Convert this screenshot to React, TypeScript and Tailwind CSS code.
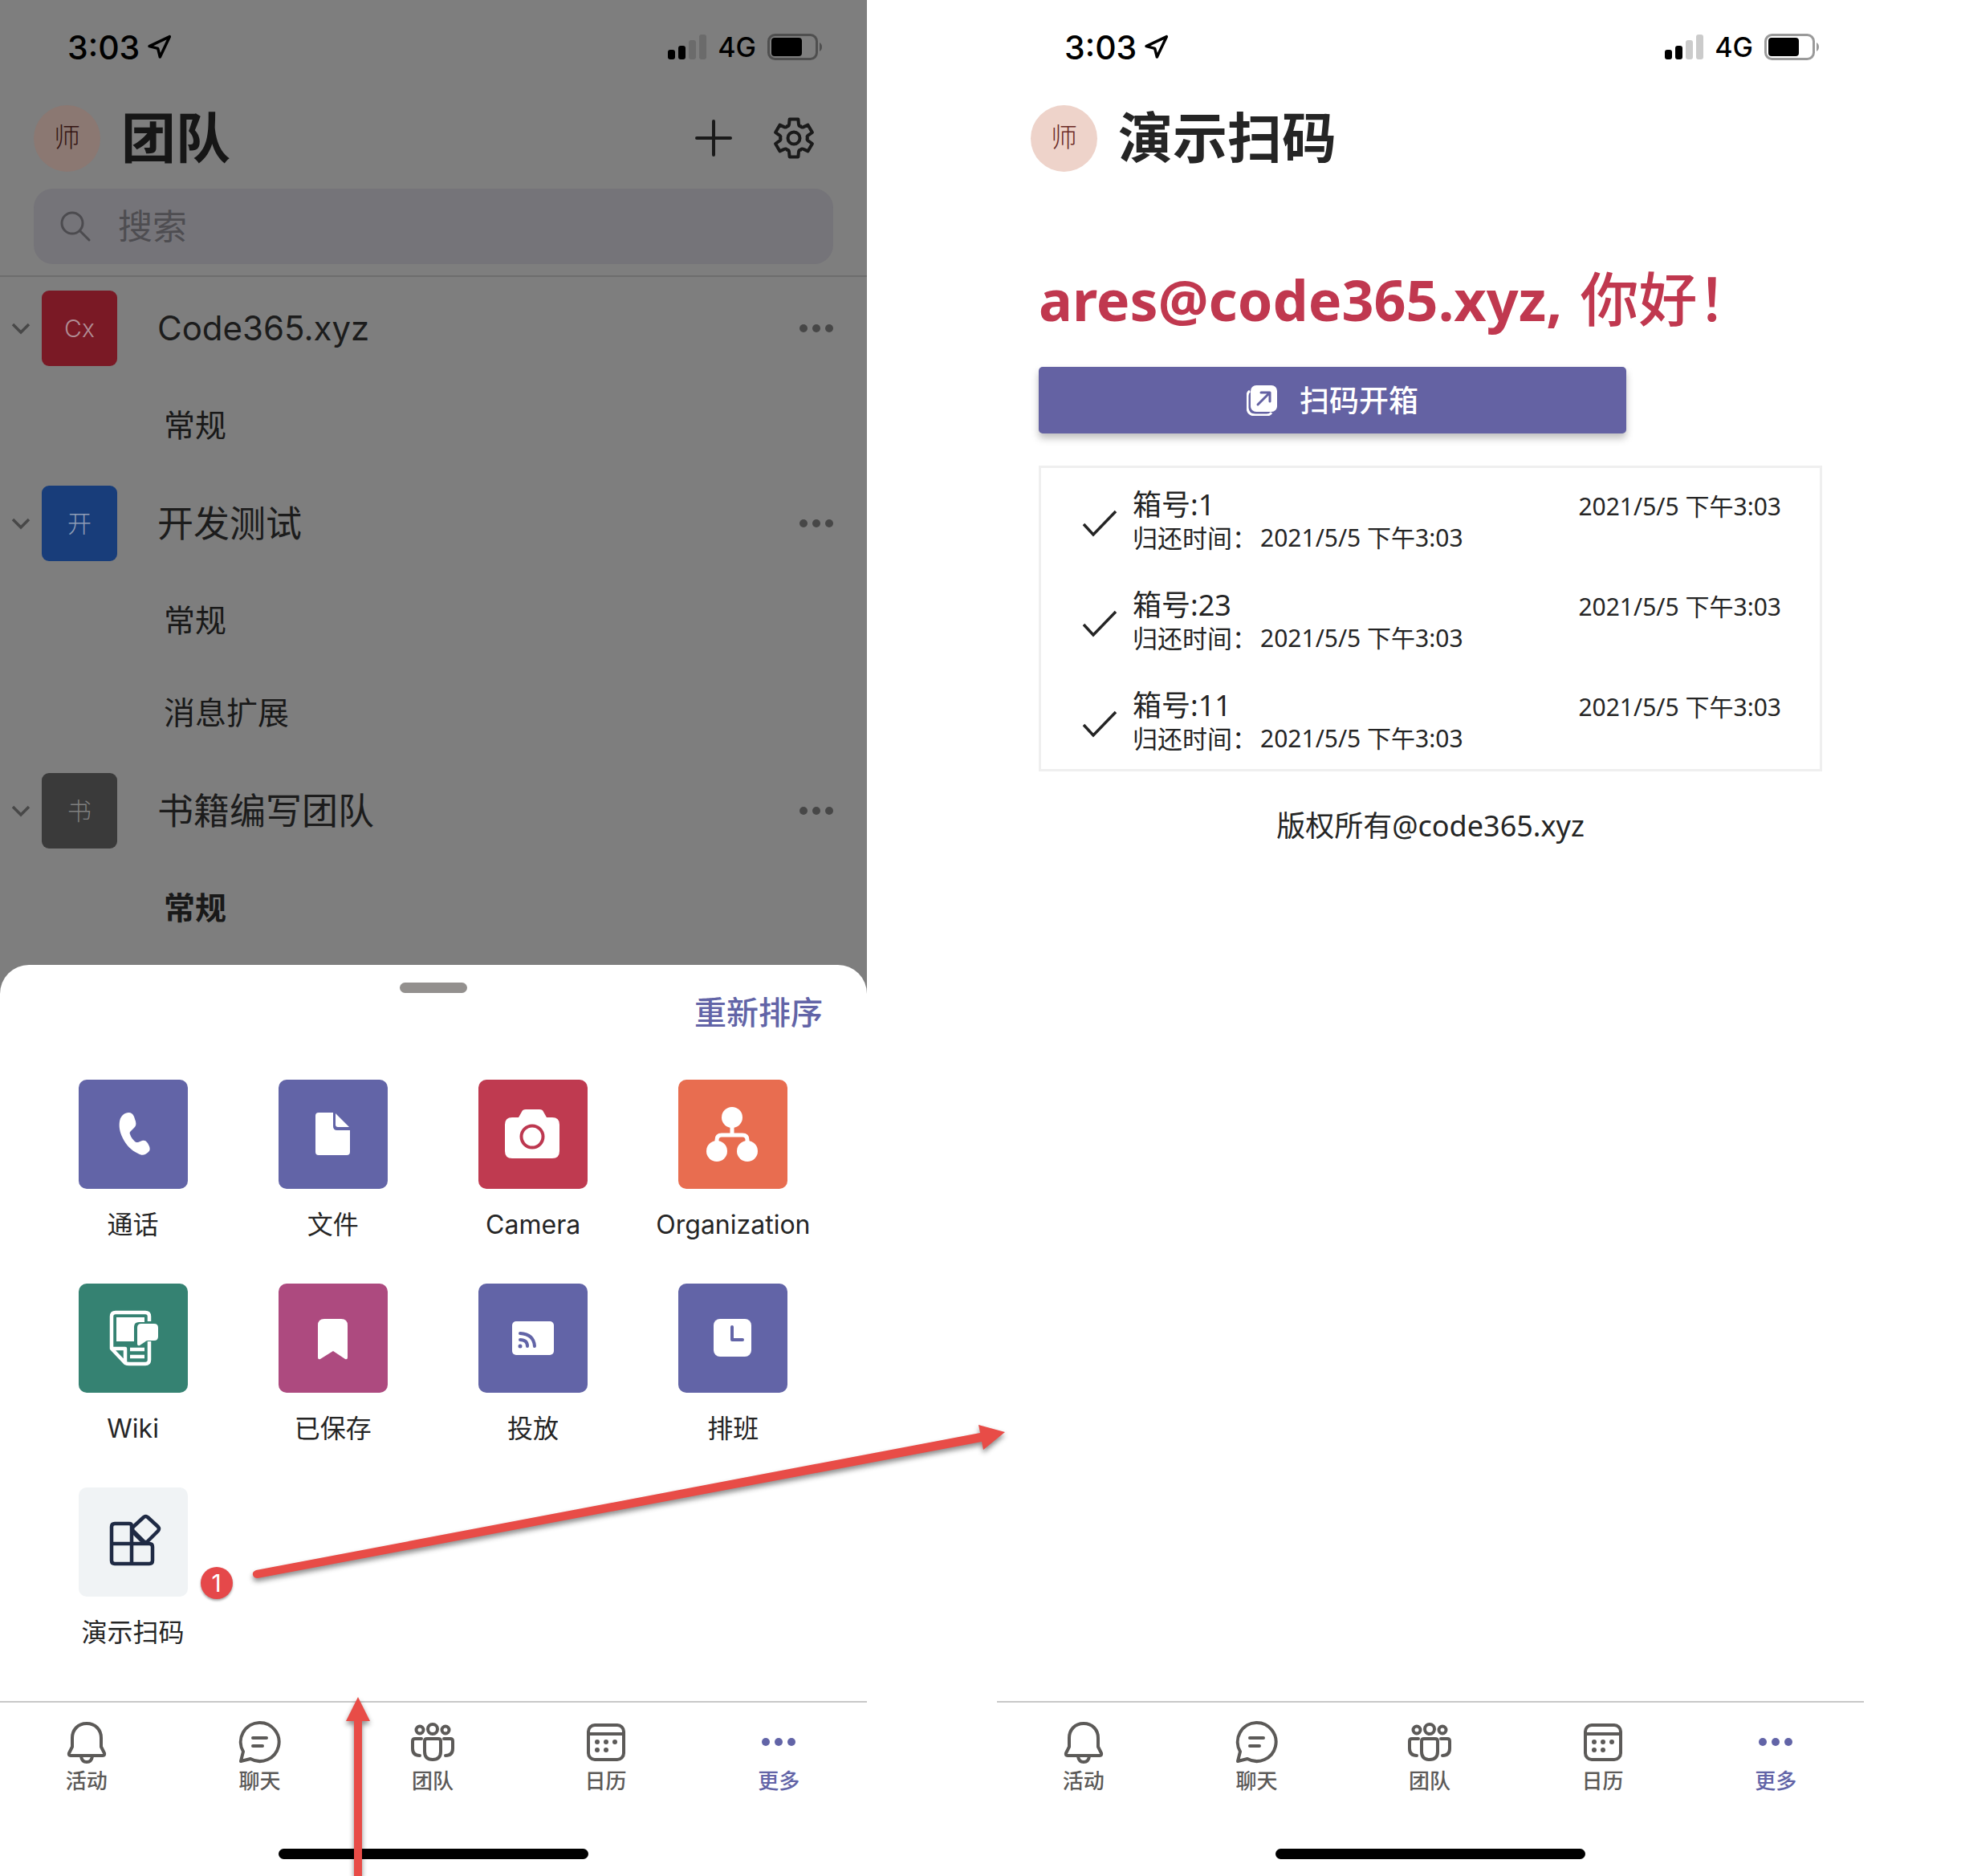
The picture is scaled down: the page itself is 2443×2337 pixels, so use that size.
import type { ReactNode } from "react";
import { Navigation } from "lucide-react";

const UI_FONT = "font-['Inter','Noto_Sans_CJK_SC',sans-serif]";
const WEB_FONT = "font-['Noto_Sans','Noto_Sans_CJK_SC',sans-serif]";

function StatusBar({ dim = false }: { dim?: boolean }) {
  return (
    <div className="flex h-[118px] items-center justify-between pr-[54px] pl-[84px] text-black">
      <div className="flex items-center gap-2">
        <span className="text-[41px] leading-none font-medium">3:03</span>
        <Navigation className="size-[32px]" strokeWidth={2.6} />
      </div>
      <div className="flex items-center gap-[14px]">
        <svg width="48" height="32" viewBox="0 0 48 32" aria-label="信号">
          <rect x="0" y="19" width="9" height="12" rx="3" />
          <rect x="13" y="14" width="9" height="17" rx="3" />
          <rect x="26" y="7" width="9" height="24" rx="3" fill={dim ? "#6b6b6b" : "#cbcbcb"} />
          <rect x="39" y="0" width="9" height="31" rx="3" fill={dim ? "#6b6b6b" : "#cbcbcb"} />
        </svg>
        <span className="text-[34px] leading-none font-medium">4G</span>
        <svg width="70" height="34" viewBox="0 0 70 34" aria-label="电池">
          <rect x="1.5" y="1.5" width="60" height="30" rx="8" fill="none" stroke={dim ? "#4f4f4f" : "#9a9a9a"} strokeWidth="3" />
          <rect x="5" y="5" width="38" height="23" rx="4" />
          <path d="M65 11c4 2 4 9 0 11z" fill={dim ? "#4f4f4f" : "#9a9a9a"} />
        </svg>
      </div>
    </div>
  );
}

const polar = (deg: number, r: number) => {
  const a = (deg * Math.PI) / 180;
  return `${(26 + r * Math.sin(a)).toFixed(2)} ${(26 - r * Math.cos(a)).toFixed(2)}`;
};
const gearPath =
  [0, 60, 120, 180, 240, 300]
    .map(
      (d) =>
        `${d === 0 ? "M" : "L"}${polar(d - 13, 24)}L${polar(d + 13, 24)}L${polar(d + 18, 19)}Q${polar(d + 23, 15.5)} ${polar(d + 30, 17)}Q${polar(d + 37, 15.5)} ${polar(d + 42, 19)}`,
    )
    .join("") + "Z";

function PageHeader({ title, dim = false, children }: { title: string; dim?: boolean; children?: ReactNode }) {
  return (
    <header className="flex h-[108px] items-center pr-[65px] pl-[42px]">
      <span
        className={`flex size-[83px] items-center justify-center rounded-full text-[33px] font-light ${
          dim ? "bg-[#8b7872] text-[#341412]" : "bg-[#eed3ca] text-[#6b2a26]"
        }`}
      >
        师
      </span>
      <h1 className={`ml-[26px] text-[68px] leading-none font-bold ${dim ? "text-[#161616]" : "text-[#252525]"}`}>{title}</h1>
      <div className="ml-auto flex items-center gap-[50px]">{children}</div>
    </header>
  );
}

function Dots({ className }: { className: string }) {
  return (
    <svg width="44" height="12" viewBox="0 0 44 12" className={className}>
      <circle cx="6" cy="6" r="5" />
      <circle cx="22" cy="6" r="5" />
      <circle cx="38" cy="6" r="5" />
    </svg>
  );
}

type Team = { name: string; mark: string; tile: string; size: string; channels: { name: string; unread?: boolean }[] };

const teams: Team[] = [
  { name: "Code365.xyz", mark: "Cx", size: "text-[42px]", tile: "bg-[#7a1925] text-[#b08c94]", channels: [{ name: "常规" }] },
  {
    name: "开发测试",
    mark: "开",
    size: "text-[45px]",
    tile: "bg-[#183d7a] text-[#8f9db6]",
    channels: [{ name: "常规" }, { name: "消息扩展" }],
  },
  { name: "书籍编写团队", mark: "书", size: "text-[45px]", tile: "bg-[#3a3a3a] text-[#808080]", channels: [{ name: "常规", unread: true }] },
];

function TeamGroup({ team }: { team: Team }) {
  return (
    <li>
      <div className="flex h-[128px] items-center pr-[41px] pl-[14px]">
        <button type="button" aria-label={`折叠 ${team.name}`} className="flex w-[38px]">
          <svg width="24" height="16" viewBox="0 0 24 16" fill="none" stroke="#484848" strokeWidth="3.5">
            <path d="M2 3l10 10L22 3" />
          </svg>
        </button>
        <span className={`flex size-[94px] items-center justify-center rounded-[9px] text-[30px] font-light ${team.tile}`}>{team.mark}</span>
        <span className={`ml-[50px] leading-none text-[#1c1c1c] ${team.size}`}>{team.name}</span>
        <button type="button" aria-label="更多选项" className="ml-auto">
          <Dots className="fill-[#474747]" />
        </button>
      </div>
      <ul>
        {team.channels.map((c) => (
          <li key={c.name} className="flex h-[115px] items-center pb-[3px] pl-[204px]">
            <a href="#" className={`text-[39px] leading-none text-[#191919] ${c.unread ? "font-bold" : ""}`}>
              {c.name}
            </a>
          </li>
        ))}
      </ul>
    </li>
  );
}

const tileIcons: Record<string, ReactNode> = {
  call: (
    <path
      fill="#fff"
      d="M58 42c5-2 9-1 11 4l2 6c1 4 0 6-2 8l-4 4c-1 1-2 2-1 4 1 4 4 7 6 9 1 1 2 1 4 1l5-2c3-1 5 0 7 3l2 4c1 3 1 5-1 7-4 4-8 5-13 2-9-4-15-11-19-19-4-8-5-15-4-21 1-5 3-8 7-10z"
    />
  ),
  file: (
    <g fill="#fff">
      <path d="M50 41h18v17q0 5 5 5h16v27q0 4-4 4H50q-4 0-4-4V45q0-4 4-4z" />
      <path d="M71 42l17 17H74q-3 0-3-3z" />
    </g>
  ),
  camera: (
    <>
      <path fill="#fff" d="M42 47h8l4-7q1-3 5-3h17q4 0 5 3l4 7h7q9 0 9 9v33q0 9-9 9H42q-9 0-9-9V56q0-9 9-9z" />
      <circle cx="67" cy="71" r="13.500" fill="none" stroke="#bd3850" strokeWidth="4" />
    </>
  ),
  org: (
    <>
      <g fill="#fff">
        <circle cx="67" cy="47" r="13" />
        <circle cx="48" cy="89" r="13" />
        <circle cx="86" cy="89" r="13" />
      </g>
      <path d="M67 55v14M48 84v-9q0-6 6-6h26q6 0 6 6v9" fill="none" stroke="#fff" strokeWidth="5" />
    </>
  ),
  wiki: (
    <>
      <path d="M88 47v-6q0-5-5-5H46q-5 0-5 5v40l17 18q2 1 5 1h20q5 0 5-5V72M41 81h17v19" fill="none" stroke="#fff" strokeWidth="4.500" strokeLinejoin="round" />
      <path d="M47 42h35v6H75q-6 0-6 6v18H47z" fill="#fff" />
      <path d="M78 50h16q5 0 5 5v11q0 5-5 5h-8q-2 0-4 2l-6 4q-3 1-3-2V55q0-5 5-5z" fill="#fff" />
      <path d="M64 82h18M64 91h18" stroke="#fff" strokeWidth="4.500" />
    </>
  ),
  saved: <path fill="#fff" d="M57 44h21q8 0 8 8v40q0 3-3 2L68 84l-16 10q-3 1-3-2V52q0-8 8-8z" />,
  cast: (
    <>
      <rect x="42" y="47" width="52" height="42" rx="5" fill="#fff" />
      <g fill="none" stroke="#6264a7" strokeWidth="4" strokeLinecap="round">
        <path d="M52 70q9 0 9 8M52 62q17 1 18 16" />
      </g>
      <circle cx="52" cy="78" r="2.500" fill="#6264a7" />
    </>
  ),
  shifts: (
    <>
      <rect x="44" y="44" width="47" height="47" rx="8" fill="#fff" />
      <path d="M67 54v16h13" fill="none" stroke="#6264a7" strokeWidth="4" strokeLinecap="round" strokeLinejoin="round" />
    </>
  ),
  demo: (
    <g fill="none" stroke="#1f2a44" strokeWidth="4.500" strokeLinejoin="round">
      <path d="M66 70V48q0-3-3-3H45q-4 0-4 4v42q0 4 4 4h43q4 0 4-4V74q0-4-4-4H41M66 70v25" />
      <path d="M81 37q2-2 5 0l13 12q2 2 0 5L86 67q-3 2-5 0L68 54q-2-3 0-5zM67 55l14 14" />
    </g>
  ),
};

const apps = [
  { id: "call", name: "通话", bg: "bg-[#6264a7]" },
  { id: "file", name: "文件", bg: "bg-[#6264a7]" },
  { id: "camera", name: "Camera", bg: "bg-[#bf3a50]" },
  { id: "org", name: "Organization", bg: "bg-[#e86d50]" },
  { id: "wiki", name: "Wiki", bg: "bg-[#358272]" },
  { id: "saved", name: "已保存", bg: "bg-[#ad4a7f]" },
  { id: "cast", name: "投放", bg: "bg-[#6264a7]" },
  { id: "shifts", name: "排班", bg: "bg-[#6264a7]" },
  { id: "demo", name: "演示扫码", bg: "bg-[#f0f3f5]" },
];

const tabs = [
  {
    name: "活动",
    icon: (
      <>
        <path d="M28 5c-11 0-18 8-18 18v11L6 42q-1 3 2 3h40q3 0 2-3l-4-8V23C46 13 39 5 28 5z" />
        <path d="M21 46q1 7 7 7t7-7" />
      </>
    ),
  },
  {
    name: "聊天",
    icon: (
      <>
        <path d="M28 4a24 24 0 1 1-11 45L5 52l3-12A24 24 0 0 1 28 4z" />
        <path d="M20 23h17M20 33h12" />
      </>
    ),
  },
  {
    name: "团队",
    icon: (
      <>
        <circle cx="28" cy="12" r="6" />
        <circle cx="12" cy="13" r="4.500" />
        <circle cx="44" cy="13" r="4.500" />
        <path d="M21 24h14q3 0 3 3v13q0 10-10 10T18 40V27q0-3 3-3z" />
        <path d="M14 24H6q-3 0-3 3v9q0 9 9 9M42 24h8q3 0 3 3v9q0 9-9 9" />
      </>
    ),
  },
  {
    name: "日历",
    icon: (
      <>
        <rect x="6" y="7" width="44" height="43" rx="8" />
        <path d="M6 18h44" />
        <g fill="#5c5a58" stroke="none">
          <circle cx="17" cy="28" r="3" />
          <circle cx="28" cy="28" r="3" />
          <circle cx="39" cy="28" r="3" />
          <circle cx="17" cy="38" r="3" />
          <circle cx="28" cy="38" r="3" />
        </g>
      </>
    ),
  },
];

function TabBar() {
  return (
    <nav className="mt-auto border-t-2 border-[#c8c8c8] bg-white pt-[21px] pb-[21px]">
      <div className="grid grid-cols-5 pr-[2px] text-[26px] leading-[34px] font-medium">
        {tabs.map((t) => (
          <a key={t.name} href="#" className="flex flex-col items-center gap-1 text-[#5c5a58]">
            <svg width="56" height="56" viewBox="0 0 56 56" fill="none" stroke="currentColor" strokeWidth="4" strokeLinecap="round" strokeLinejoin="round">
              {t.icon}
            </svg>
            {t.name}
          </a>
        ))}
        <a href="#" aria-current="page" className="flex flex-col items-center gap-1 text-[#6264a7]">
          <span className="flex h-[56px] items-center">
            <Dots className="fill-current" />
          </span>
          更多
        </a>
      </div>
      <div className="mx-auto mt-[67px] h-[13px] w-[386px] rounded-full bg-black" />
    </nav>
  );
}

function TeamsScreen() {
  return (
    <section className={`flex min-w-0 flex-1 flex-col bg-[#7e7e7e] ${UI_FONT}`}>
      <StatusBar dim />
      <PageHeader title="团队" dim>
        <button type="button" aria-label="新建">
          <svg width="48" height="48" viewBox="0 0 48 48" stroke="#1a1a1a" strokeWidth="4" strokeLinecap="round">
            <path d="M24 3v42M3 24h42" />
          </svg>
        </button>
        <button type="button" aria-label="设置">
          <svg width="52" height="52" viewBox="0 0 52 52" fill="none" stroke="#1a1a1a" strokeWidth="4" strokeLinejoin="round">
            <path d={gearPath} />
            <circle cx="26" cy="26" r="7.500" />
          </svg>
        </button>
      </PageHeader>
      <div className="border-b-2 border-[#6d6d6d] px-[42px] pt-[9px] pb-[14px]">
        <label className="flex h-[94px] items-center gap-[34px] rounded-[24px] bg-[#757479] pl-[33px]">
          <svg width="38" height="38" viewBox="0 0 38 38" fill="none" stroke="#4c4b4f" strokeWidth="3" strokeLinecap="round">
            <circle cx="15" cy="15" r="13" />
            <path d="M25 25l11 11" />
          </svg>
          <input
            type="search"
            aria-label="搜索"
            placeholder="搜索"
            className="min-w-0 flex-1 bg-transparent text-[43px] leading-[60px] outline-none placeholder:text-[#4e4d51]"
          />
        </label>
      </div>
      <ul className="pb-[13px]">
        {teams.map((t) => (
          <TeamGroup key={t.name} team={t} />
        ))}
      </ul>
      <div className="flex flex-1 flex-col rounded-t-[36px] bg-white pt-[22px]">
        <div className="mx-auto h-[13px] w-[84px] rounded-full bg-[#93908e]" />
        <button type="button" className="mr-[55px] self-end text-[40px] leading-[50px] font-medium text-[#6264a7]">
          重新排序
        </button>
        <div className="mt-[58px] mb-[53px] grid grid-cols-4 gap-y-[53px] pr-[42px] pl-[41px]">
          {apps.map((a) => (
            <div key={a.id} className="relative flex justify-center">
              <button type="button" className="flex flex-col items-center text-[32px] leading-[40px] text-[#252525]">
                <span className={`relative block size-[136px] rounded-[10px] ${a.bg}`}>
                  <svg viewBox="0 0 136 136" className="size-full">
                    {tileIcons[a.id]}
                  </svg>
                  {a.id === "demo" && (
                    <span className="absolute top-[99px] left-[152px] flex size-[40px] items-center justify-center rounded-full bg-[#e5484a] text-[30px] leading-none text-white shadow-[0_2px_3px_rgba(0,0,0,0.35)]">
                      1
                    </span>
                  )}
                </span>
                <span className="mt-[25px] whitespace-nowrap">{a.name}</span>
              </button>
            </div>
          ))}
        </div>
        <TabBar />
      </div>
    </section>
  );
}

const boxes = ["1", "23", "11"];
const STAMP = "2021/5/5 下午3:03";

function ScanScreen() {
  return (
    <section className={`flex min-w-0 flex-1 flex-col bg-white ${UI_FONT}`}>
      <StatusBar />
      <PageHeader title="演示扫码" />
      <main className={`px-[52px] pt-[96px] text-[#252525] ${WEB_FONT}`}>
        <h2 className="text-[70px] leading-[100px] font-bold whitespace-nowrap text-[#c0384f]">
          ares@code365.xyz, <span className="ml-1 text-[73px] font-medium">你好！</span>
        </h2>
        <button
          type="button"
          className="mt-[34px] flex h-[83px] w-3/4 items-center justify-center gap-[28px] rounded-[5px] bg-[#6462a3] text-[37px] font-medium text-white shadow-[0_6px_10px_rgba(0,0,0,0.25)]"
        >
          <svg width="38" height="38" viewBox="0 0 38 38" fill="none">
            <path d="M4 7q-3 2-3 6v14q0 10 10 10h14q4 0 6-3" stroke="#fff" strokeWidth="3" />
            <rect x="5" y="0" width="33" height="33" rx="7" fill="#fff" />
            <path d="M14 24L29 9M18 9h11v11" stroke="#6462a3" strokeWidth="3" strokeLinecap="round" strokeLinejoin="round" />
          </svg>
          扫码开箱
        </button>
        <ul className="mt-[40px] border-[3px] border-[#efefef]">
          {boxes.map((n) => (
            <li key={n} className="flex h-[125px] items-start pr-[48px] pl-[50px]">
              <svg width="46" height="36" viewBox="0 0 46 36" fill="none" stroke="#252525" strokeWidth="3.500" className="mt-[51px]">
                <path d="M3 19l12 13L43 3" />
              </svg>
              <div className="ml-[18px] pt-[25px]">
                <p className="text-[36px] leading-[42px]">箱号:{n}</p>
                <p className="flex gap-1 text-[31px] leading-[40px]">
                  <span>归还时间：</span>
                  <time className="text-[30px]">{STAMP}</time>
                </p>
              </div>
              <time className="ml-auto pt-[28px] text-[30px] leading-[40px]">{STAMP}</time>
            </li>
          ))}
        </ul>
        <p className="mt-[43px] text-center text-[36px] leading-[50px]">版权所有@code365.xyz</p>
      </main>
      <TabBar />
    </section>
  );
}

function Arrows() {
  return (
    <svg
      viewBox="0 0 2443 2337"
      className="pointer-events-none absolute inset-0 size-full fill-[#e84c47] drop-shadow-[0_4px_3px_rgba(0,0,0,0.45)]"
      aria-hidden="true"
    >
      <path d="M319 1956L1221 1785L1219 1775L1252 1784L1225 1806L1223 1796L321 1966Q316 1966 315 1962T319 1956Z" />
      <path d="M446 2114L461 2144H451V2337H441V2144H431Z" />
    </svg>
  );
}

export default function App() {
  return (
    <div className="relative flex min-h-screen gap-[162px] bg-white pr-[121px]">
      <TeamsScreen />
      <ScanScreen />
      <Arrows />
    </div>
  );
}
